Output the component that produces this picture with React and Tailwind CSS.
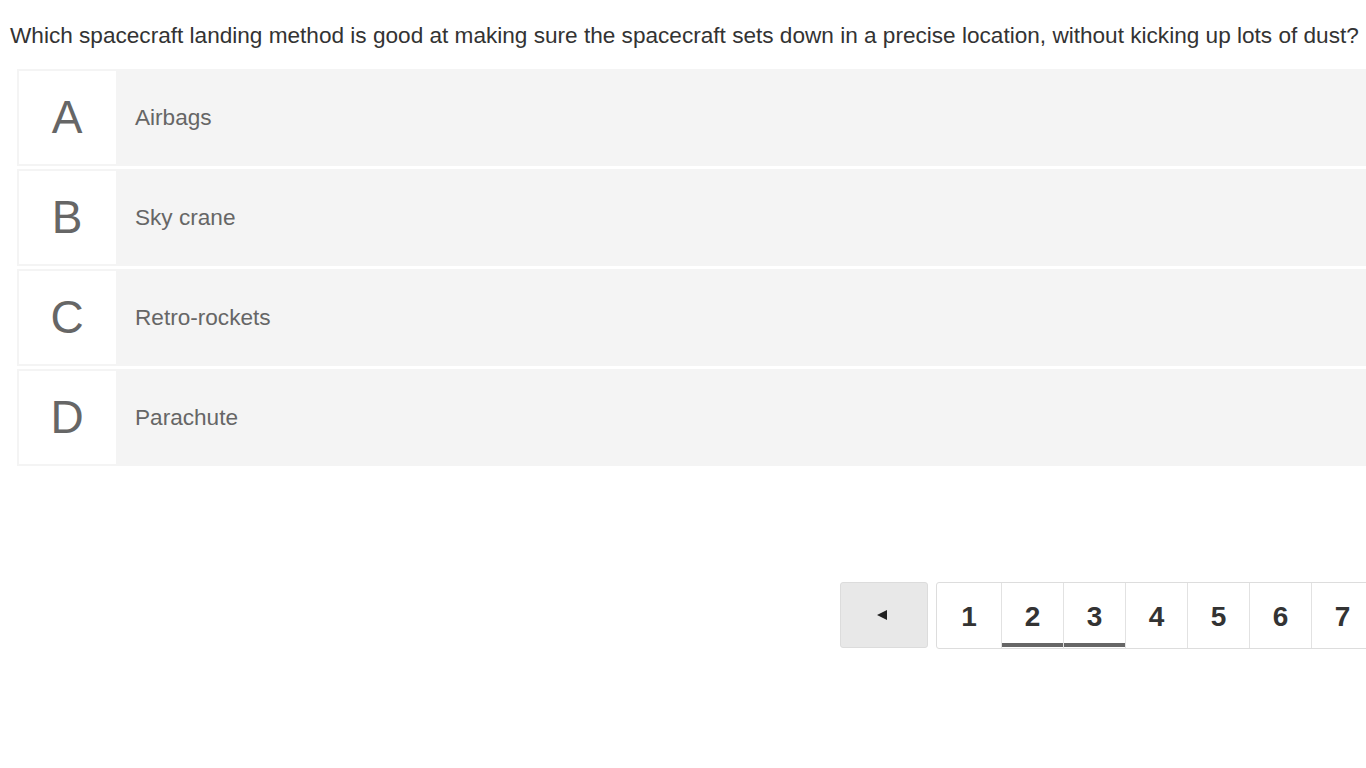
import React from "react";

const options = [
  { key: "A", label: "Airbags" },
  { key: "B", label: "Sky crane" },
  { key: "C", label: "Retro-rockets" },
  { key: "D", label: "Parachute" },
];

const pages = [1, 2, 3, 4, 5, 6, 7];
const marked = [2, 3];

const App = () => {
  return (
    <div className="w-[1366px] h-[768px] overflow-hidden bg-white font-['Liberation_Sans',Arial,sans-serif]">
      <h3 className="pl-[10px] pt-[21px] text-[22.6px] leading-[30px] text-[#333] whitespace-nowrap">
        Which spacecraft landing method is good at making sure the spacecraft sets down in a precise location, without kicking up lots of dust?
      </h3>

      <div className="ml-[17px] mt-[18px] w-[1400px] flex flex-col gap-[3px]">
        {options.map((o) => (
          <div key={o.key} className="h-[97px] bg-[#f4f4f4] flex p-[2px]">
            <div className="w-[97px] h-full bg-white flex items-center justify-center pr-[1px] text-[46px] text-[#666]">
              {o.key}
            </div>
            <div className="flex items-center pl-[19px] text-[22.6px] text-[#666]">
              {o.label}
            </div>
          </div>
        ))}
      </div>

      <div className="mt-[116px] ml-[840px] flex items-start w-[600px]">
        <button className="w-[88px] h-[66px] bg-[#e8e8e8] border border-[#dcdcdc] rounded-[3px] flex items-center justify-center">
          <svg width="12" height="12" viewBox="0 0 12 12" className="mr-[4px]">
            <path d="M1 6 L11 1 L11 11 Z" fill="#222" />
          </svg>
        </button>
        <div className="ml-[8px] flex border border-[#ddd] rounded-l-[3px] h-[67px] bg-white">
          {pages.map((p, i) => (
            <div
              key={p}
              className={
                "relative w-[62px] h-full flex items-center justify-center pt-[2px] text-[28px] font-bold text-[#333] " +
                (i > 0 ? "border-l border-[#e2e2e2]" : "w-[64px]")
              }
            >
              {p}
              {marked.includes(p) && (
                <span className="absolute left-0 right-0 bottom-[1px] h-[4px] bg-[#666]" />
              )}
            </div>
          ))}
        </div>
      </div>
    </div>
  );
};

export default App;
